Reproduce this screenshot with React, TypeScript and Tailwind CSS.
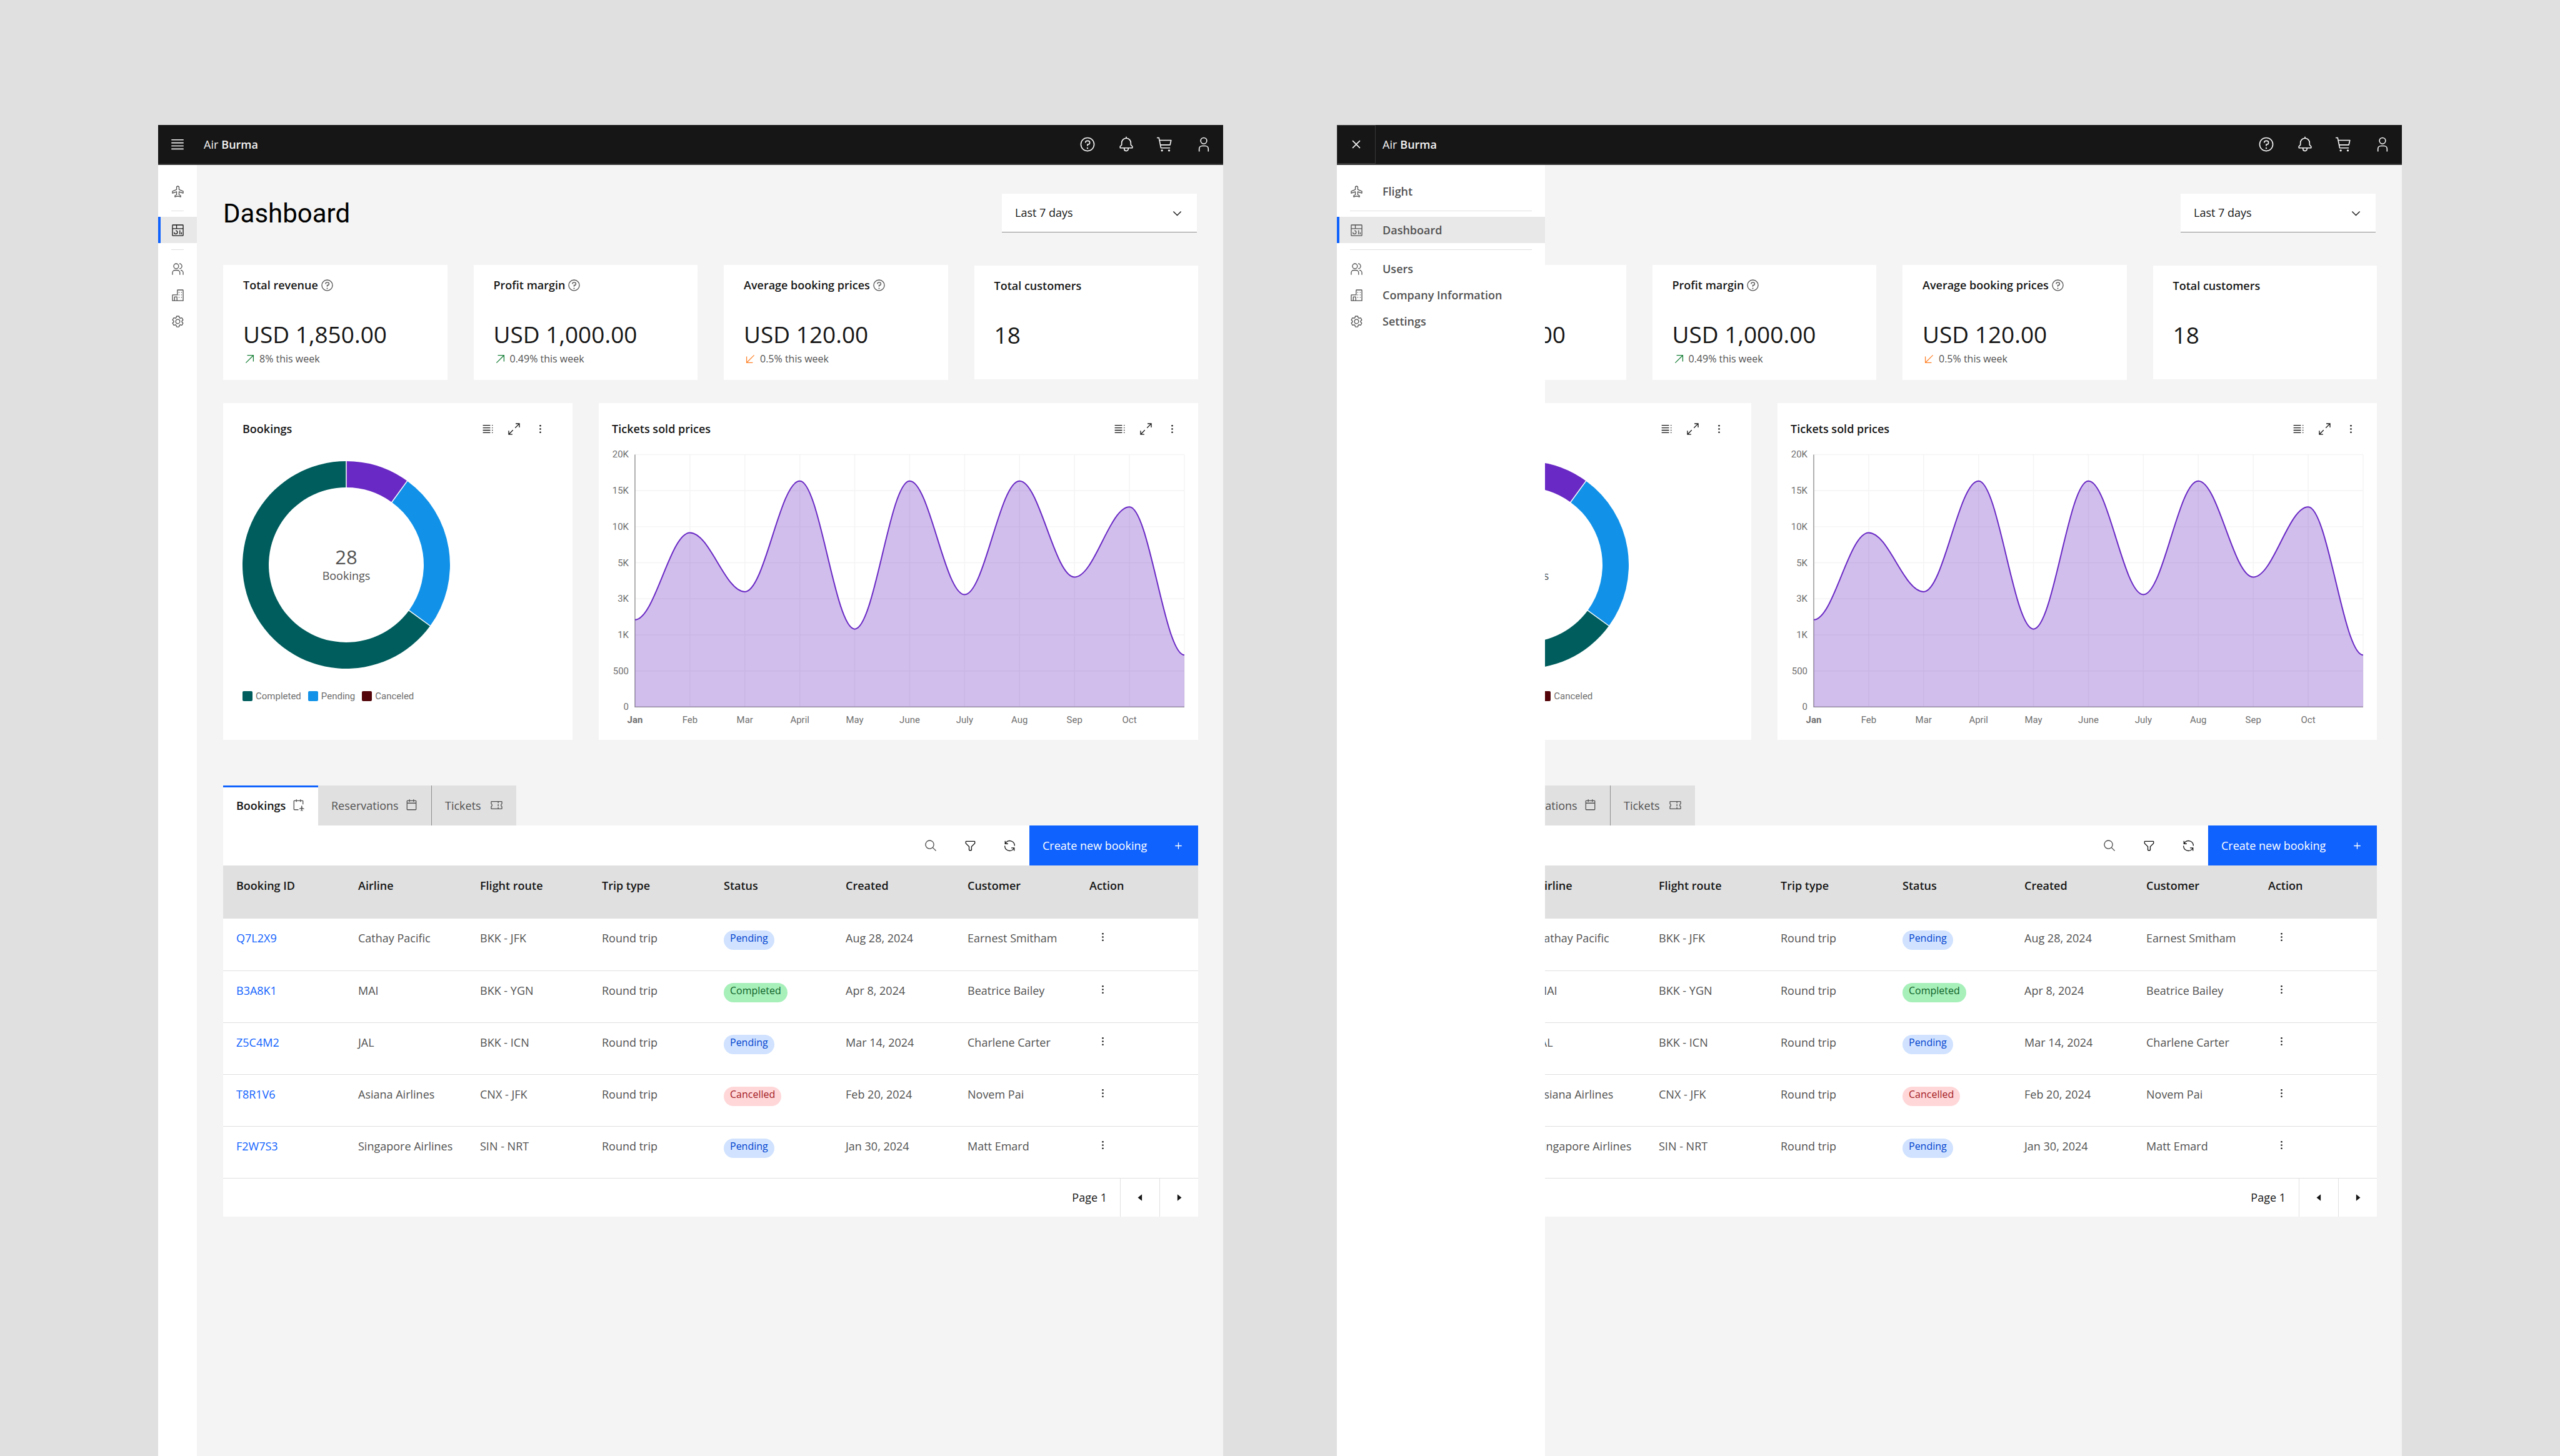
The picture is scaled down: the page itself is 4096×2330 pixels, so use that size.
import React from "react";

type IconProps = { className?: string; children: React.ReactNode };

function Icon({ className = "size-[21px]", children }: IconProps) {
  return (
    <svg viewBox="0 0 32 32" fill="currentColor" aria-hidden="true" className={"shrink-0 " + className}>
      {children}
    </svg>
  );
}

const glyphs = {
  menu: <path d="M4 6H28V8H4zM4 24H28V26H4zM4 12H28V14H4zM4 18H28V20H4z" />,
  close: <path d="M17.4141 16 24 9.4141 22.5859 8 16 14.5859 9.4143 8 8 9.4141 14.5859 16 8 22.5859 9.4143 24 16 17.4141 22.5859 24 24 22.5859 17.4141 16z" />,
  help: (
    <>
      <path d="M16,2A14,14,0,1,0,30,16,14,14,0,0,0,16,2Zm0,26A12,12,0,1,1,28,16,12,12,0,0,1,16,28Z" />
      <circle cx="16" cy="23.5" r="1.5" />
      <path d="M17,8H15.5A4.49,4.49,0,0,0,11,12.5V13h2v-.5A2.5,2.5,0,0,1,15.5,10H17a2.5,2.5,0,0,1,0,5H15v4.5h2V17a4.5,4.5,0,0,0,0-9Z" />
    </>
  ),
  bell: (
    <path d="M28.7071,19.293,26,16.5859V13a10.0136,10.0136,0,0,0-9-9.9492V1H15V3.0508A10.0136,10.0136,0,0,0,6,13v3.5859L3.2929,19.293A1,1,0,0,0,3,20v3a1,1,0,0,0,1,1h7v.7768a5.152,5.152,0,0,0,4.5,5.1987A5.0057,5.0057,0,0,0,21,25V24h7a1,1,0,0,0,1-1V20A1,1,0,0,0,28.7071,19.293ZM19,25a3,3,0,0,1-6,0V24h6Zm8-3H5V20.4141L7.707,17.707A1,1,0,0,0,8,17V13a8,8,0,0,1,16,0v4a1,1,0,0,0,.293.707L27,20.4141Z" />
  ),
  cart: (
    <>
      <circle cx="10" cy="28" r="2" />
      <circle cx="24" cy="28" r="2" />
      <path d="M28,7H5.82L5,2.8A1,1,0,0,0,4,2H0V4H3.18L7,23.2A1,1,0,0,0,8,24H26V22H8.82L8,18H26a1,1,0,0,0,1-.78l2-9A1,1,0,0,0,28,7ZM25.2,16H7.62L6.22,9H26.75Z" />
    </>
  ),
  user: (
    <>
      <path d="M16,4a5,5,0,1,1-5,5,5,5,0,0,1,5-5m0-2a7,7,0,1,0,7,7A7,7,0,0,0,16,2Z" />
      <path d="M26,30H24V25a5,5,0,0,0-5-5H13a5,5,0,0,0-5,5v5H6V25a7,7,0,0,1,7-7h6a7,7,0,0,1,7,7Z" />
    </>
  ),
  plane: (
    <path
      fill="none"
      stroke="currentColor"
      strokeWidth="2"
      strokeLinejoin="round"
      d="M16 3a3 3 0 0 0-3 3v5.3L3 15.4V20l10-3.6V24l-4 2.2V29l7-1.7 7 1.7v-2.8L19 24v-7.6L29 20v-4.6l-10-4.1V6a3 3 0 0 0-3-3z"
    />
  ),
  dashboard: (
    <>
      <path d="M24 21h2v5h-2z M20 16h2v10h-2z M11 26a5.0059 5.0059 0 0 1-5-5H8a3 3 0 1 0 3-3V16a5 5 0 0 1 0 10z" />
      <path d="M28 2H4A2.002 2.002 0 0 0 2 4V28a2.0023 2.0023 0 0 0 2 2H28a2.0027 2.0027 0 0 0 2-2V4A2.0023 2.0023 0 0 0 28 2Zm0 9H14V4H28ZM12 4v7H4V4ZM4 28V13H28.0007l.0013 15Z" />
    </>
  ),
  users: (
    <path d="M30,30H28V25a5.0057,5.0057,0,0,0-5-5V18a7.0078,7.0078,0,0,1,7,7Z M22,30H20V25a5.0059,5.0059,0,0,0-5-5H9a5.0059,5.0059,0,0,0-5,5v5H2V25a7.0082,7.0082,0,0,1,7-7h6a7.0082,7.0082,0,0,1,7,7Z M20,2V4a5,5,0,0,1,0,10v2A7,7,0,0,0,20,2Z M12,4A5,5,0,1,1,7,9a5,5,0,0,1,5-5m0-2a7,7,0,1,0,7,7A7,7,0,0,0,12,2Z" />
  ),
  building: (
    <>
      <path d="M28,2H16a2,2,0,0,0-2,2V14H4a2,2,0,0,0-2,2V30H30V4A2,2,0,0,0,28,2ZM9,28V21h4v7Zm19,0H15V20a1,1,0,0,0-1-1H8a1,1,0,0,0-1,1v8H4V16H16V4H28Z" />
      <path d="M18 8h2v2h-2zM24 8h2v2h-2zM18 14h2v2h-2zM24 14h2v2h-2zM18 20h2v2h-2zM24 20h2v2h-2z" />
    </>
  ),
  settings: (
    <>
      <path d="M27,16.76c0-.25,0-.5,0-.76s0-.51,0-.77l1.92-1.68A2,2,0,0,0,29.3,11L26.94,7a2,2,0,0,0-1.73-1,2,2,0,0,0-.64.1l-2.43.82a11.35,11.35,0,0,0-1.31-.75l-.51-2.52a2,2,0,0,0-2-1.61H13.64a2,2,0,0,0-2,1.61l-.51,2.52a11.48,11.48,0,0,0-1.32.75L7.43,6.06A2,2,0,0,0,6.79,6,2,2,0,0,0,5.06,7L2.7,11a2,2,0,0,0,.41,2.51L5,15.24c0,.25,0,.5,0,.76s0,.51,0,.77L3.11,18.45A2,2,0,0,0,2.7,21L5.06,25a2,2,0,0,0,1.73,1,2,2,0,0,0,.64-.1l2.43-.82a11.35,11.35,0,0,0,1.31.75l.51,2.52a2,2,0,0,0,2,1.61h4.72a2,2,0,0,0,2-1.61l.51-2.52a11.48,11.48,0,0,0,1.32-.75l2.42.82a2,2,0,0,0,.64.1,2,2,0,0,0,1.73-1L29.3,21a2,2,0,0,0-.41-2.51ZM25.21,24l-3.43-1.16a8.86,8.86,0,0,1-2.71,1.57L18.36,28H13.64l-.71-3.55a9.36,9.36,0,0,1-2.7-1.57L6.79,24,4.43,20l2.72-2.4a8.9,8.9,0,0,1,0-3.13L4.43,12,6.79,8l3.43,1.16a8.86,8.86,0,0,1,2.71-1.57L13.64,4h4.72l.71,3.55a9.36,9.36,0,0,1,2.7,1.57L25.21,8,27.57,12l-2.72,2.4a8.9,8.9,0,0,1,0,3.13L27.57,20Z" />
      <path d="M16,22a6,6,0,1,1,6-6A5.94,5.94,0,0,1,16,22Zm0-10a3.91,3.91,0,0,0-4,4,3.91,3.91,0,0,0,4,4,3.91,3.91,0,0,0,4-4A3.91,3.91,0,0,0,16,12Z" />
    </>
  ),
  list: <path d="M4 6h18v2H4zM4 12h18v2H4zM4 18h18v2H4zM4 24h18v2H4zM26 6h2v2h-2zM26 12h2v2h-2zM26 18h2v2h-2zM26 24h2v2h-2z" />,
  maximize: (
    <path d="M20 2 20 4 26.586 4 18 12.582 19.414 14 28 5.414 28 12 30 12 30 2 20 2zM14 19.416 12.592 18 4 26.586 4 20 2 20 2 30 12 30 12 28 5.414 28 14 19.416z" />
  ),
  overflow: (
    <>
      <circle cx="16" cy="8" r="2" />
      <circle cx="16" cy="16" r="2" />
      <circle cx="16" cy="24" r="2" />
    </>
  ),
  upRight: <path d="M10 6 10 8 22.59 8 6 24.59 7.41 26 24 9.41 24 22 26 22 26 6 10 6z" />,
  downLeft: <path d="M22 26 22 24 9.41 24 26 7.41 24.59 6 8 22.59 8 10 6 10 6 26 22 26z" />,
  chevron: <path d="M16 22 6 12 7.4 10.6 16 19.2 24.6 10.6 26 12z" />,
  add: <path d="M17 15 17 8 15 8 15 15 8 15 8 17 15 17 15 24 17 24 17 17 24 17 24 15z" />,
  search: (
    <path d="M29,27.5859l-7.5521-7.5521a11.0177,11.0177,0,1,0-1.4141,1.4141L27.5859,29ZM4,13a9,9,0,1,1,9,9A9.01,9.01,0,0,1,4,13Z" />
  ),
  filter: (
    <path d="M18,28H14a2,2,0,0,1-2-2V18.41L4.59,11A2,2,0,0,1,4,9.59V6A2,2,0,0,1,6,4H26a2,2,0,0,1,2,2V9.59A2,2,0,0,1,27.41,11L20,18.41V26A2,2,0,0,1,18,28ZM6,6V9.59l8,8V26h4V17.59l8-8V6Z" />
  ),
  renew: (
    <path d="M12,10H6.78A11,11,0,0,1,27,16h2A13,13,0,0,0,6,7.68V4H4v8h8ZM20,22h5.22A11,11,0,0,1,5,16H3a13,13,0,0,0,23,8.32V28h2V20H20Z" />
  ),
  caretLeft: <path d="M20 24 10 16 20 8z" />,
  caretRight: <path d="M12 8 22 16 12 24z" />,
  calendar: (
    <path d="M26,4H22V2H20V4H12V2H10V4H6C4.9,4,4,4.9,4,6V26c0,1.1.9,2,2,2H26c1.1,0,2-.9,2-2V6C28,4.9,27.1,4,26,4ZM26,26H6V12H26Zm0-16H6V6h4V8h2V6h8V8h2V6h4Z" />
  ),
  bookingPlane: (
    <>
      <path
        fill="none"
        stroke="currentColor"
        strokeWidth="2"
        d="M16 27H6a1 1 0 0 1-1-1V6a1 1 0 0 1 1-1h20a1 1 0 0 1 1 1v8M11 2v6M21 2v6"
      />
      <path d="M24 17a1.2 1.2 0 0 0-1.2 1.2V22L18 24.5V26l4.8-1.2V28L21 29v1l3-.6 3 .6v-1l-1.8-1v-3.2L30 26v-1.5L25.2 22v-3.8A1.2 1.2 0 0 0 24 17z" />
    </>
  ),
  ticket: (
    <path
      fill="none"
      stroke="currentColor"
      strokeWidth="2"
      d="M4 7h24a1 1 0 0 1 1 1v4.5a4 4 0 0 0 0 7V24a1 1 0 0 1-1 1H4a1 1 0 0 1-1-1v-4.5a4 4 0 0 0 0-7V8a1 1 0 0 1 1-1zM20 7v4M20 13.5v5M20 21v4"
    />
  ),
};

type GlyphName = keyof typeof glyphs;

const navGroups: { label: string; glyph: GlyphName; active?: boolean }[][] = [
  [{ label: "Flight", glyph: "plane" }],
  [{ label: "Dashboard", glyph: "dashboard", active: true }],
  [
    { label: "Users", glyph: "users" },
    { label: "Company Information", glyph: "building" },
    { label: "Settings", glyph: "settings" },
  ],
];

function Header({ open }: { open: boolean }) {
  const actions: { label: string; glyph: GlyphName }[] = [
    { label: "Help", glyph: "help" },
    { label: "Notifications", glyph: "bell" },
    { label: "Cart", glyph: "cart" },
    { label: "Account", glyph: "user" },
  ];
  return (
    <header className="flex h-16 items-stretch border-b-2 border-[#393939] bg-[#161616] text-[#f4f4f4]">
      <button
        type="button"
        aria-label={open ? "Close menu" : "Open menu"}
        className={open ? "flex w-[62px] items-center justify-center border border-[#393939]" : "flex w-[62px] items-center justify-center"}
      >
        <Icon className="size-[26px]">{open ? glyphs.close : glyphs.menu}</Icon>
      </button>
      <a href="#home" className="ml-[11px] flex items-center gap-[5px] text-[18px]">
        Air <span className="font-semibold">Burma</span>
      </a>
      <div className="ml-auto flex">
        {actions.map((a) => (
          <button key={a.label} type="button" aria-label={a.label} className="flex w-[62px] items-center justify-center">
            <Icon className="size-[26px]">{glyphs[a.glyph]}</Icon>
          </button>
        ))}
      </div>
    </header>
  );
}

function Sidebar({ open }: { open: boolean }) {
  return (
    <nav
      aria-label="Main"
      className={
        open
          ? "absolute inset-y-0 left-0 z-10 w-[333px] bg-white pt-[21px]"
          : "w-[62px] shrink-0 bg-white pt-[21px]"
      }
    >
      {navGroups.map((group, i) => (
        <React.Fragment key={i}>
          {i > 0 && <hr className="mx-[21px] mt-[10px] mb-[9px] border-t border-[#e0e0e0]" />}
          {group.map((item) => (
            <a
              key={item.label}
              href={"#" + item.glyph}
              aria-label={item.label}
              className={
                item.active
                  ? "flex h-[42px] items-center border-l-4 border-[#0f62fe] bg-[#e8e8e8] pl-[17px] text-[#525252]"
                  : "flex h-[42px] items-center pl-[21px] text-[#525252]"
              }
            >
              <Icon className={item.active && !open ? "size-[21px] text-[#161616]" : "size-[21px]"}>{glyphs[item.glyph]}</Icon>
              {open && <span className="ml-[31px] text-[18px] font-semibold">{item.label}</span>}
            </a>
          ))}
        </React.Fragment>
      ))}
    </nav>
  );
}

const stats: { title: string; value: string; trend?: "up" | "down"; note?: string }[] = [
  { title: "Total revenue", value: "USD 1,850.00", trend: "up", note: "8% this week" },
  { title: "Profit margin", value: "USD 1,000.00", trend: "up", note: "0.49% this week" },
  { title: "Average booking prices", value: "USD 120.00", trend: "down", note: "0.5% this week" },
  { title: "Total customers", value: "18" },
];

function StatCard({ stat }: { stat: (typeof stats)[number] }) {
  return (
    <article className={stat.note ? "bg-white px-8 pt-5 pb-[23px]" : "my-px bg-white px-8 pt-5 pb-[23px]"}>
      <h2 className="flex h-6 items-center gap-1 text-[18px] font-semibold whitespace-nowrap">
        {stat.title}
        {stat.note && <Icon className="size-[21px] text-[#525252]">{glyphs.help}</Icon>}
      </h2>
      <p className="mt-[43px] text-[37px] leading-[48px]">{stat.value}</p>
      {stat.note && (
        <p className="mt-[5px] flex h-[21px] items-center gap-[5px] text-[16px] leading-[21px] text-[#525252]">
          <Icon className={stat.trend === "up" ? "size-[21px] text-[#198038]" : "size-[21px] text-[#ff832b]"}>
            {stat.trend === "up" ? glyphs.upRight : glyphs.downLeft}
          </Icon>
          {stat.note}
        </p>
      )}
    </article>
  );
}

function ChartHeader({ title }: { title: string }) {
  const tools: { label: string; glyph: GlyphName }[] = [
    { label: "Show as table", glyph: "list" },
    { label: "Expand", glyph: "maximize" },
    { label: "More options", glyph: "overflow" },
  ];
  return (
    <div className="flex h-[42px] items-center">
      <h2 className="text-[18px] font-semibold">{title}</h2>
      <div className="ml-auto flex">
        {tools.map((t) => (
          <button key={t.label} type="button" aria-label={t.label} className="flex size-[42px] items-center justify-center">
            <Icon>{glyphs[t.glyph]}</Icon>
          </button>
        ))}
      </div>
    </div>
  );
}

const slices = [
  { from: 0, to: 0.1, color: "#6929c4" },
  { from: 0.1, to: 0.35, color: "#1192e8" },
  { from: 0.35, to: 1, color: "#005d5d" },
];

function arcPath(from: number, to: number) {
  const at = (t: number, r: number) => {
    const a = t * Math.PI * 2;
    return (166 + r * Math.sin(a)).toFixed(2) + " " + (166 - r * Math.cos(a)).toFixed(2);
  };
  const large = to - from > 0.5 ? 1 : 0;
  return `M${at(from, 166)}A166 166 0 ${large} 1 ${at(to, 166)}L${at(to, 124)}A124 124 0 ${large} 0 ${at(from, 124)}Z`;
}

function spoke(t: number) {
  const a = t * Math.PI * 2;
  return { x1: 166 + 122 * Math.sin(a), y1: 166 - 122 * Math.cos(a), x2: 166 + 168 * Math.sin(a), y2: 166 - 168 * Math.cos(a) };
}

function BookingsChart() {
  const legend = [
    { label: "Completed", swatch: "bg-[#005d5d]" },
    { label: "Pending", swatch: "bg-[#1192e8]" },
    { label: "Canceled", swatch: "bg-[#520408]" },
  ];
  return (
    <section className="bg-white px-[31px] pt-5 pb-[62px]">
      <ChartHeader title="Bookings" />
      <svg viewBox="0 0 332 332" className="mt-[31px] size-[332px]" role="img" aria-label="28 bookings by status">
        {slices.map((s) => (
          <path key={s.color} d={arcPath(s.from, s.to)} fill={s.color} />
        ))}
        {slices.map((s) => (
          <line key={s.color} {...spoke(s.from)} stroke="#ffffff" strokeWidth="1.5" />
        ))}
        <text x="166" y="165" textAnchor="middle" className="fill-[#525252] text-[31px]">28</text>
        <text x="166" y="190" textAnchor="middle" className="fill-[#525252] text-[18px]">Bookings</text>
      </svg>
      <ul className="mt-[36px] flex gap-[11px]">
        {legend.map((l) => (
          <li key={l.label} className="flex h-4 items-center gap-[5px] font-[Roboto,sans-serif] text-[15px] leading-4 text-[#6f6f6f]">
            <span className={"size-4 rounded-[2px] " + l.swatch} />
            {l.label}
          </li>
        ))}
      </ul>
    </section>
  );
}

const months = ["Jan", "Feb", "Mar", "April", "May", "June", "July", "Aug", "Sep", "Oct"];
const yTicks = ["20K", "15K", "10K", "5K", "3K", "1K", "500", "0"];
const curve = [274, 134.6, 229.2, 51.8, 289, 51.8, 233.8, 51.8, 205.8, 93.4, 330.6];
const plot = { left: 37, right: 917, top: 9.5, bottom: 413.8 };
const stepX = (plot.right - plot.left) / 10;
const stepY = (plot.bottom - plot.top) / 7;

function curvePath() {
  let d = `M${plot.left} ${curve[0]}`;
  for (let i = 1; i < curve.length; i++) {
    const x0 = plot.left + stepX * (i - 1);
    const x1 = plot.left + stepX * i;
    const c = stepX * 0.36;
    d += `C${x0 + c} ${curve[i - 1]} ${x1 - c} ${curve[i]} ${x1} ${curve[i]}`;
  }
  return d;
}

function TicketsChart() {
  const d = curvePath();
  return (
    <section className="bg-white px-[21px] pt-5 pb-4">
      <ChartHeader title="Tickets sold prices" />
      <svg viewBox="0 0 918 450" className="mt-[11px] w-full" role="img" aria-label="Tickets sold prices by month">
        {yTicks.map((t, i) => (
          <line key={t} x1={plot.left} x2={plot.right} y1={plot.top + stepY * i} y2={plot.top + stepY * i} stroke="#f4f4f4" strokeWidth="1.5" />
        ))}
        {curve.map((_, i) => (
          <line key={i} x1={plot.left + stepX * i} x2={plot.left + stepX * i} y1={plot.top} y2={plot.bottom} stroke="#f4f4f4" strokeWidth="1.5" />
        ))}
        <path d={`M${plot.left} ${plot.top}V${plot.bottom}H${plot.right}`} fill="none" stroke="#8d8d8d" strokeWidth="1.3" />
        <path d={`${d}V${plot.bottom}H${plot.left}Z`} fill="#6929c4" fillOpacity="0.3" />
        <path d={d} fill="none" stroke="#6929c4" strokeWidth="2" />
        {yTicks.map((t, i) => (
          <text key={t} x="27" y={plot.top + stepY * i + 5} textAnchor="end" className="fill-[#6f6f6f] font-[Roboto,sans-serif] text-[15px]">
            {t}
          </text>
        ))}
        {months.map((m, i) => (
          <text
            key={m}
            x={plot.left + stepX * i}
            y="439"
            textAnchor="middle"
            className={
              i === 0
                ? "fill-[#6f6f6f] font-[Roboto,sans-serif] text-[15px] font-bold"
                : "fill-[#6f6f6f] font-[Roboto,sans-serif] text-[15px]"
            }
          >
            {m}
          </text>
        ))}
      </svg>
    </section>
  );
}

const badgeStyles: Record<string, string> = {
  Pending: "bg-[#d0e2ff] text-[#0043ce]",
  Completed: "bg-[#a7f0ba] text-[#0e6027]",
  Cancelled: "bg-[#ffd7d9] text-[#a2191f]",
};

const columns = ["Booking ID", "Airline", "Flight route", "Trip type", "Status", "Created", "Customer", "Action"];

const rows = [
  { id: "Q7L2X9", airline: "Cathay Pacific", route: "BKK - JFK", status: "Pending", created: "Aug 28, 2024", customer: "Earnest Smitham" },
  { id: "B3A8K1", airline: "MAI", route: "BKK - YGN", status: "Completed", created: "Apr 8, 2024", customer: "Beatrice Bailey" },
  { id: "Z5C4M2", airline: "JAL", route: "BKK - ICN", status: "Pending", created: "Mar 14, 2024", customer: "Charlene Carter" },
  { id: "T8R1V6", airline: "Asiana Airlines", route: "CNX - JFK", status: "Cancelled", created: "Feb 20, 2024", customer: "Novem Pai" },
  { id: "F2W7S3", airline: "Singapore Airlines", route: "SIN - NRT", status: "Pending", created: "Jan 30, 2024", customer: "Matt Emard" },
];

function BookingsTable() {
  const tools: { label: string; glyph: GlyphName; tone: string }[] = [
    { label: "Search", glyph: "search", tone: "text-[#525252]" },
    { label: "Filter", glyph: "filter", tone: "text-[#161616]" },
    { label: "Refresh", glyph: "renew", tone: "text-[#161616]" },
  ];
  return (
    <section className="mt-[73px] text-[18px] leading-6">
      <div role="tablist" className="flex h-16">
        <button type="button" role="tab" aria-selected="true" className="flex w-[152px] items-center justify-between border-t-3 border-[#0f62fe] bg-white px-[21px] pb-1 font-semibold">
          Bookings
          <Icon className="size-[21px] text-[#525252]">{glyphs.bookingPlane}</Icon>
        </button>
        <button type="button" role="tab" aria-selected="false" className="flex w-[181px] items-center justify-between bg-[#e0e0e0] px-[21px] pb-px text-[#525252]">
          Reservations
          <Icon>{glyphs.calendar}</Icon>
        </button>
        <button type="button" role="tab" aria-selected="false" className="flex w-[136px] items-center justify-between border-l border-[#8d8d8d] bg-[#e0e0e0] px-[21px] pb-px text-[#525252]">
          Tickets
          <Icon>{glyphs.ticket}</Icon>
        </button>
      </div>
      <div className="bg-white">
        <div className="flex h-16 justify-end">
          {tools.map((t) => (
            <button key={t.label} type="button" aria-label={t.label} className={"flex w-[63px] items-center justify-center " + t.tone}>
              <Icon>{glyphs[t.glyph]}</Icon>
            </button>
          ))}
          <button type="button" className="flex w-[270px] items-center justify-between bg-[#0f62fe] px-[21px] text-white">
            Create new booking
            <Icon>{glyphs.add}</Icon>
          </button>
        </div>
        <table className="w-full table-fixed text-left whitespace-nowrap">
          <thead className="bg-[#e0e0e0]">
            <tr className="h-[85px] align-top">
              {columns.map((c) => (
                <th key={c} scope="col" className="pt-5 pl-[21px] font-semibold">
                  {c}
                </th>
              ))}
            </tr>
          </thead>
          <tbody className="text-[#525252]">
            {rows.map((r) => (
              <tr key={r.id} className="h-[83px] border-b border-[#e0e0e0] align-top">
                <td className="pt-[19px] pl-[21px]">
                  <a href={"#" + r.id} className="text-[#0f62fe]">{r.id}</a>
                </td>
                <td className="pt-[19px] pl-[21px]">{r.airline}</td>
                <td className="pt-[19px] pl-[21px]">{r.route}</td>
                <td className="pt-[19px] pl-[21px]">Round trip</td>
                <td className="pt-[19px] pl-[21px]">
                  <span className={"block w-fit rounded-full px-[10px] pb-[7px] text-[16px] leading-6 " + badgeStyles[r.status]}>{r.status}</span>
                </td>
                <td className="pt-[19px] pl-[21px]">{r.created}</td>
                <td className="pt-[19px] pl-[21px]">{r.customer}</td>
                <td className="pt-[19px] pl-[21px]">
                  <button type="button" aria-label={"Actions for " + r.id} className="flex w-[42px] justify-center text-[#161616]">
                    <Icon>{glyphs.overflow}</Icon>
                  </button>
                </td>
              </tr>
            ))}
          </tbody>
        </table>
        <div className="flex h-[61px] items-stretch justify-end">
          <span className="flex items-center pr-[21px]">Page 1</span>
          <button type="button" aria-label="Previous page" className="flex w-[63px] items-center justify-center border-l border-[#e0e0e0]">
            <Icon>{glyphs.caretLeft}</Icon>
          </button>
          <button type="button" aria-label="Next page" className="flex w-[62px] items-center justify-center border-l border-[#e0e0e0]">
            <Icon>{glyphs.caretRight}</Icon>
          </button>
        </div>
      </div>
    </section>
  );
}

function Screen({ open }: { open: boolean }) {
  return (
    <div className="flex flex-col overflow-hidden bg-[#f4f4f4] text-[#161616]">
      <Header open={open} />
      <div className="relative flex grow">
        <Sidebar open={open} />
        <main className={open ? "ml-[62px] min-w-0 grow pt-[46px] pr-10 pl-[42px]" : "min-w-0 grow pt-[46px] pr-10 pl-[42px]"}>
          <div className="flex h-[62px] items-center justify-between">
            <h1 className={open ? "invisible font-[Roboto,sans-serif] text-[42px] text-black" : "font-[Roboto,sans-serif] text-[42px] text-black"}>Dashboard</h1>
            <div className="relative mr-[2px] h-[62px] w-[312px]">
              <select aria-label="Date range" className="size-full appearance-none border-b border-[#8d8d8d] bg-white pl-[21px] text-[18px] text-[#161616]">
                <option>Last 7 days</option>
              </select>
              <span className="pointer-events-none absolute inset-y-0 right-[21px] flex items-center">
                <Icon>{glyphs.chevron}</Icon>
              </span>
            </div>
          </div>
          <div className="mt-[52px] grid grid-cols-4 gap-[42px]">
            {stats.map((s) => (
              <StatCard key={s.title} stat={s} />
            ))}
          </div>
          <div className="mt-[37px] grid grid-cols-[559fr_959fr] gap-[42px]">
            <BookingsChart />
            <TicketsChart />
          </div>
          <BookingsTable />
        </main>
      </div>
    </div>
  );
}

export default function App() {
  return (
    <div className="grid min-h-screen grid-cols-2 gap-[182px] bg-[#e0e0e0] px-[253px] pt-[200px] font-['Open_Sans',sans-serif]">
      <Screen open={false} />
      <Screen open />
    </div>
  );
}
